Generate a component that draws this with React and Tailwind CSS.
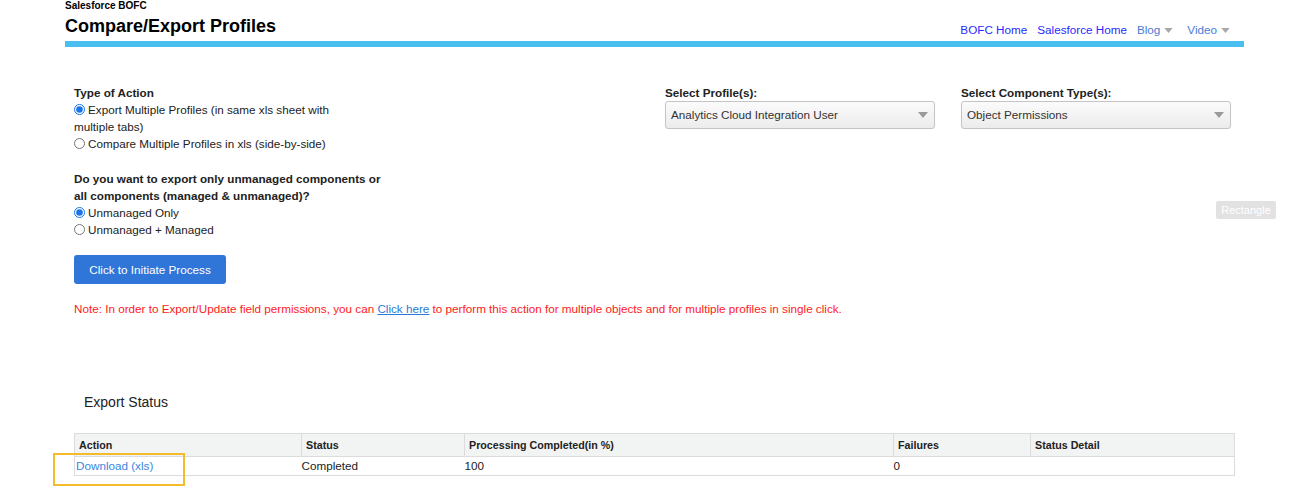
import { useState } from "react";

const FONT = { fontFamily: '"Liberation Sans", Arial, sans-serif' };

const Caret = ({ className = "" }) => (
  <svg viewBox="0 0 10 6" className={className} aria-hidden="true">
    <path d="M0 0h10L5 6z" fill="currentColor" />
  </svg>
);

const FakeSelect = ({ value }) => (
  <div className="flex h-[28px] w-[270px] items-center justify-between rounded-[3px] border border-[#c4c4c4] bg-gradient-to-b from-[#fbfbfb] to-[#ececec] pl-[5px] pr-[6px] text-[11.7px] text-[#333]">
    <span>{value}</span>
    <Caret className="h-[6px] w-[10px] text-[#9a9a9a]" />
  </div>
);

const Radio = ({ name, checked, onChange, children }) => (
  <label className="block w-[290px] leading-[17px]">
    <input
      type="radio"
      name={name}
      checked={checked}
      onChange={onChange}
      className="m-0 mr-[3px] inline-block h-[11px] w-[11px] align-[-1px] accent-[#1a73e8]"
    />
    {children}
  </label>
);

const columns = [
  { label: "Action", w: "w-[227px]" },
  { label: "Status", w: "w-[163px]" },
  { label: "Processing Completed(in %)", w: "w-[429px]" },
  { label: "Failures", w: "w-[137px]" },
  { label: "Status Detail", w: "" },
];

export default function App() {
  const [action, setAction] = useState("export");
  const [scope, setScope] = useState("unmanaged");

  return (
    <div className="relative min-h-[490px] bg-white text-[11.7px] text-[#222]" style={FONT}>
      {/* Header */}
      <div className="mx-[65px] w-[1179px]">
        <div className="text-[10px] font-bold leading-[11px] text-black">Salesforce BOFC</div>
        <div className="flex items-end justify-between">
          <h1 className="pt-[1px] text-[18px] font-bold leading-[29px] text-black">Compare/Export Profiles</h1>
          <nav className="flex items-center gap-[10px] pb-[4px] pr-[14px] text-[11.7px] leading-[14px]">
            <a href="#" className="text-[#2a2aff]">BOFC Home</a>
            <a href="#" className="text-[#2a2aff]">Salesforce Home</a>
            <a href="#" className="flex items-center gap-[4px] text-[#4a7cd6]">
              Blog <Caret className="h-[5px] w-[9px] text-[#a8a8a8]" />
            </a>
            <a href="#" className="ml-[4px] flex items-center gap-[4px] text-[#4a7cd6]">
              Video <Caret className="h-[5px] w-[9px] text-[#a8a8a8]" />
            </a>
          </nav>
        </div>
        <div className="h-[6px] bg-[#48bfee]" />
      </div>

      {/* Form */}
      <div className="ml-[74px] mt-[37px] flex">
        <div className="w-[591px]">
          <div className="w-[312px]">
            <div className="font-bold leading-[17px]">Type of Action</div>
            <Radio name="action" checked={action === "export"} onChange={() => setAction("export")}>
              Export Multiple Profiles (in same xls sheet with multiple tabs)
            </Radio>
            <Radio name="action" checked={action === "compare"} onChange={() => setAction("compare")}>
              Compare Multiple Profiles in xls (side-by-side)
            </Radio>

            <div className="mt-[18px] font-bold leading-[17px]">
              Do you want to export only unmanaged components or all components (managed &amp; unmanaged)?
            </div>
            <Radio name="scope" checked={scope === "unmanaged"} onChange={() => setScope("unmanaged")}>
              Unmanaged Only
            </Radio>
            <Radio name="scope" checked={scope === "both"} onChange={() => setScope("both")}>
              Unmanaged + Managed
            </Radio>
          </div>

          <button
            type="button"
            className="mt-[17px] h-[29px] w-[152px] rounded-[3px] bg-[#2f76d8] text-[11.7px] text-white"
          >
            Click to Initiate Process
          </button>
        </div>

        <div className="w-[296px]">
          <div className="font-bold leading-[17px]">Select Profile(s):</div>
          <FakeSelect value="Analytics Cloud Integration User" />
        </div>
        <div>
          <div className="font-bold leading-[17px]">Select Component Type(s):</div>
          <FakeSelect value="Object Permissions" />
        </div>
      </div>

      <p className="ml-[74px] mt-[18px] leading-[14px] text-[#ff1a1a]">
        Note: In order to Export/Update field permissions, you can{" "}
        <a href="#" className="text-[#2b7bd6] underline">Click here</a> to perform this action for multiple objects and for
        multiple profiles in single click.
      </p>

      {/* Export status */}
      <div className="ml-[84px] mt-[77px] text-[14px] leading-[18px] text-[#222]">Export Status</div>

      <table className="ml-[74px] mt-[22px] w-[1161px] border-collapse text-[11.7px]">
        <thead>
          <tr className="bg-[#f2f3f3]">
            {columns.map((c) => (
              <th
                key={c.label}
                className={`${c.w} h-[23px] border border-[#dcdcdc] px-[4px] text-left text-[10.7px] font-bold text-[#222]`}
              >
                {c.label}
              </th>
            ))}
          </tr>
        </thead>
        <tbody>
          <tr className="h-[19px]">
            <td className="border-b border-l border-[#dcdcdc] p-0 pl-[1px]">
              <a href="#" className="text-[#3a86e0]">Download (xls)</a>
            </td>
            <td className="border-b border-[#dcdcdc] p-0">Completed</td>
            <td className="border-b border-[#dcdcdc] p-0">100</td>
            <td className="border-b border-[#dcdcdc] p-0">0</td>
            <td className="border-b border-r border-[#dcdcdc] p-0" />
          </tr>
        </tbody>
      </table>

      {/* Overlays */}
      <div className="absolute left-[53px] top-[453px] h-[33px] w-[132px] border-2 border-[#f2bc2c]" />
      <div className="absolute left-[1216px] top-[201px] flex h-[18px] w-[60px] items-center justify-center rounded-[2px] bg-[#e2e2e2] text-[11px] text-white">
        Rectangle
      </div>
    </div>
  );
}
